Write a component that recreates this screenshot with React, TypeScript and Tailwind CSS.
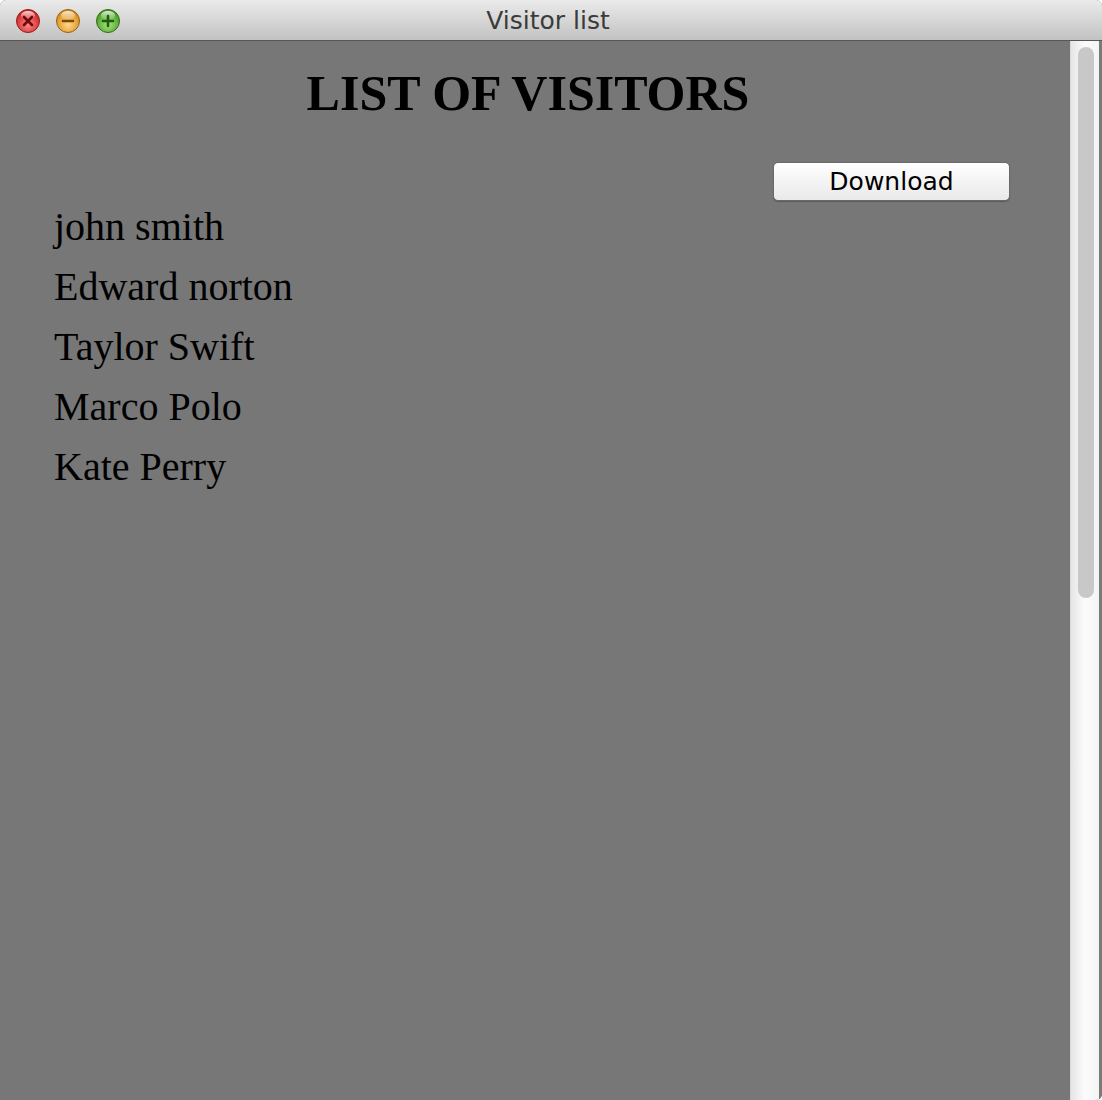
import React from "react";

const visitors = ["john smith", "Edward norton", "Taylor Swift", "Marco Polo", "Kate Perry"];

function Light({ kind }: { kind: "close" | "min" | "max" }) {
  const c = {
    close: { a: "#ff8a8a", b: "#cf2020", edge: "#8f1f1f", mark: "#6e0b0b" },
    min: { a: "#ffd98a", b: "#d98a14", edge: "#94611a", mark: "#7a4a06" },
    max: { a: "#a8e47c", b: "#449a22", edge: "#356b1d", mark: "#1f5a0e" },
  }[kind];
  const id = `g-${kind}`;
  return (
    <svg width="26" height="26" viewBox="0 0 26 26">
      <defs>
        <radialGradient id={id} cx="50%" cy="65%" r="60%">
          <stop offset="0%" stopColor={c.a} />
          <stop offset="100%" stopColor={c.b} />
        </radialGradient>
        <linearGradient id={`${id}-hl`} x1="0" y1="0" x2="0" y2="1">
          <stop offset="0%" stopColor="#ffffff" stopOpacity="0.8" />
          <stop offset="100%" stopColor="#ffffff" stopOpacity="0" />
        </linearGradient>
      </defs>
      <circle cx="13" cy="13" r="11.5" fill={`url(#${id})`} stroke={c.edge} strokeWidth="1" />
      <ellipse cx="13" cy="7.5" rx="7" ry="4.5" fill={`url(#${id}-hl)`} />
      {kind === "close" && (
        <path d="M9 9 L17 17 M17 9 L9 17" stroke={c.mark} strokeWidth="2.6" strokeLinecap="round" />
      )}
      {kind === "min" && <path d="M8 13 H18" stroke={c.mark} strokeWidth="2.6" strokeLinecap="round" />}
      {kind === "max" && (
        <path d="M8 13 H18 M13 8 V18" stroke={c.mark} strokeWidth="2.6" strokeLinecap="round" />
      )}
    </svg>
  );
}

export default function App() {
  return (
    <div className="w-[1102px] h-[1100px] flex flex-col overflow-hidden rounded-t-[6px] rounded-br-[6px] bg-[#777777]">
      {/* title bar */}
      <div className="relative h-[41px] shrink-0 flex items-center bg-gradient-to-b from-[#ebebeb] to-[#c2c2c2] border-b border-[#575757]">
        <div className="flex items-center gap-[14px] pl-[15px] pt-[1px]">
          <Light kind="close" />
          <Light kind="min" />
          <Light kind="max" />
        </div>
        <div
          className="absolute inset-0 flex items-center justify-center text-[25px] text-[#3b3b3b]"
          style={{ fontFamily: '"DejaVu Sans", sans-serif' }}
        >
          <span className="mr-[6px] mt-[1px]">Visitor list</span>
        </div>
      </div>

      <div className="flex flex-1 min-h-0">
        {/* content */}
        <div className="flex-1 bg-[#777777] text-black" style={{ fontFamily: '"Liberation Serif", serif' }}>
          <h1 className="mt-[28px] pr-[14px] text-center text-[50px] leading-[49px] font-bold">LIST OF VISITORS</h1>
          <div className="mt-[44px] flex justify-end pr-[60px]">
            <button
              className="w-[237px] h-[39px] rounded-[5px] border border-[#6a6a6a] bg-gradient-to-b from-[#ffffff] to-[#e9e9e9] text-[25px] leading-none text-black shadow-[0_1px_1px_rgba(0,0,0,0.25)]"
              style={{ fontFamily: '"DejaVu Sans", sans-serif' }}
            >
              Download
            </button>
          </div>
          <ul className="-mt-[4px] pl-[54px]">
            {visitors.map((v) => (
              <li key={v} className="text-[40px] leading-[60px]">
                {v}
              </li>
            ))}
          </ul>
        </div>

        {/* scrollbar */}
        <div className="w-[29px] shrink-0 flex bg-gradient-to-r from-[#e6e6e6] via-[#fbfbfb] to-[#f4f4f4] border-l border-[#d9d9d9]">
          <div className="flex-1 pl-[7px] pr-[4px] pt-[6px]">
            <div className="h-[551px] w-[16px] rounded-full bg-[#c8c8c8]" />
          </div>
        </div>
        <div className="w-[3px] shrink-0 bg-[#7a7a7a]" />
      </div>
    </div>
  );
}
